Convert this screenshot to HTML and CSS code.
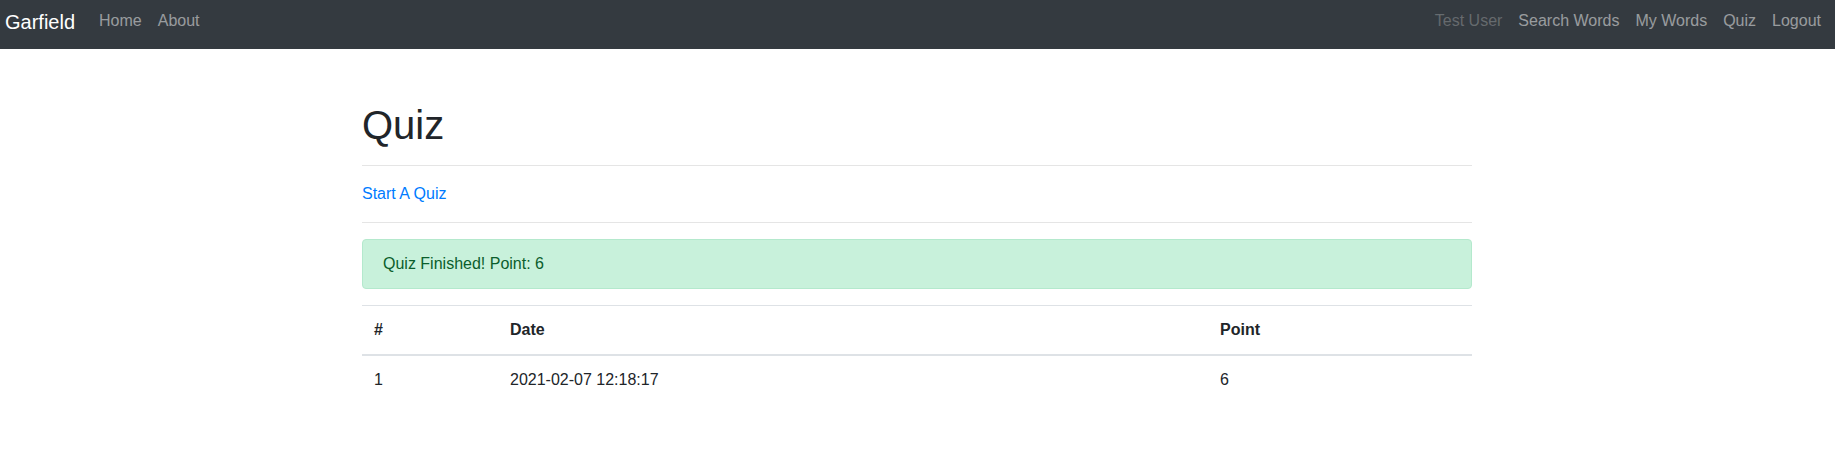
FILE: index.html
```html
<!DOCTYPE html>
<html lang="en">
<head>
<meta charset="utf-8">
<title>Quiz</title>
<link rel="stylesheet" href="styles.css">
</head>
<body>
<nav class="navbar">
  <a class="brand" href="#">Garfield</a>
  <ul class="nav">
    <li><a class="nav-link" href="#">Home</a></li>
    <li><a class="nav-link" href="#">About</a></li>
  </ul>
  <ul class="nav nav-right">
    <li><span class="nav-link disabled">Test User</span></li>
    <li><a class="nav-link" href="#">Search Words</a></li>
    <li><a class="nav-link" href="#">My Words</a></li>
    <li><a class="nav-link" href="#">Quiz</a></li>
    <li><a class="nav-link" href="#">Logout</a></li>
  </ul>
</nav>
<main class="container">
  <h1 class="title">Quiz</h1>
  <hr class="divider">
  <a class="start-link" href="#">Start A Quiz</a>
  <hr class="divider">
  <div class="alert">Quiz Finished! Point: 6</div>
  <table class="table">
    <colgroup>
      <col class="col-num">
      <col class="col-date">
      <col class="col-point">
    </colgroup>
    <thead>
      <tr><th>#</th><th>Date</th><th>Point</th></tr>
    </thead>
    <tbody>
      <tr><td>1</td><td>2021-02-07 12:18:17</td><td>6</td></tr>
    </tbody>
  </table>
</main>
</body>
</html>
```

FILE: styles.css
```css
* { box-sizing: border-box; }
html, body { margin: 0; padding: 0; }
body {
  font-family: "Liberation Sans", Arial, sans-serif;
  font-size: 16px;
  line-height: 24px;
  color: #212529;
  background: #fff;
}
a { text-decoration: none; }

.navbar {
  display: flex;
  align-items: flex-start;
  height: 49px;
  padding: 0 6px 0 5px;
  background: #343a40;
}
.brand {
  color: #fff;
  font-size: 20px;
  line-height: 30px;
  padding-top: 7px;
  margin-right: 16px;
}
.nav {
  display: flex;
  list-style: none;
  margin: 0;
  padding: 0;
}
.nav-right { margin-left: auto; }
.nav-link {
  display: block;
  padding: 9px 8px 8px;
  color: rgba(255, 255, 255, 0.5);
}
.nav-link.disabled { color: rgba(255, 255, 255, 0.25); }

.container {
  width: 1141px;
  margin: 0 auto;
  padding: 52px 16px 0 15px;
}
.title {
  margin: 0;
  font-size: 40px;
  line-height: 48px;
  font-weight: 500;
}
.divider {
  margin: 16px 0;
  border: 0;
  border-top: 1px solid rgba(0, 0, 0, 0.1);
}
.start-link {
  display: block;
  color: #007bff;
}
.alert {
  padding: 12px 20px;
  margin-bottom: 16px;
  border: 1px solid #b4e9cd;
  border-radius: 4px;
  background: #c8f1db;
  color: #0b5e2c;
}
.table {
  width: 100%;
  border-collapse: collapse;
}
.col-num { width: 136px; }
.col-date { width: 710px; }
.col-point { width: 264px; }
.table th, .table td {
  padding: 12px;
  text-align: left;
  vertical-align: top;
  border-top: 1px solid #dee2e6;
}
.table th { font-weight: 700; }
.table thead th { border-bottom: 2px solid #dee2e6; }
```
